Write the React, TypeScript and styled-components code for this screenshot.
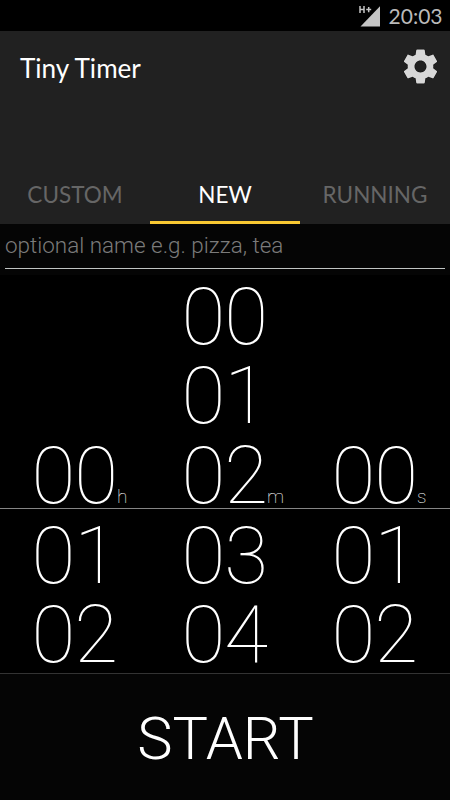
import React from "react";
import styled, { createGlobalStyle } from "styled-components";

const Global = createGlobalStyle`
  * { box-sizing: border-box; }
  body { margin: 0; background: #000; }
`;
const Screen = styled.div`
  width: 450px; height: 800px; background: #000; color: #fff;
  display: flex; flex-direction: column; overflow: hidden;
  font-family: Roboto, sans-serif; font-weight: 300;
`;
const StatusBar = styled.div`
  height: 31px; display: flex; justify-content: flex-end; align-items: center;
  gap: 8px; padding: 0 7.5px 0 0; color: #bababa;
`;
const Clock = styled.span`
  font-family: Lato, sans-serif; font-size: 21px; font-weight: 400; line-height: 24px;
`;
const SignalIcon = styled.svg`
  width: 23px; height: 24px; display: block;
`;
const Header = styled.header`
  height: 193px; background: #212121; display: flex; flex-direction: column;
  justify-content: space-between; font-family: Lato, sans-serif; font-weight: 400;
`;
const TitleRow = styled.div`
  display: flex; height: 70px; justify-content: space-between; align-items: center;
  padding: 0 9.5px 0 20px;
`;
const Title = styled.h1`
  margin: 3px 0 0; font-size: 26.1px; font-weight: 400; line-height: 32px;
`;
const GearIcon = styled.svg`
  width: 41px; height: 41px; display: block;
`;
const Tabs = styled.nav`
  display: grid; grid-template-columns: repeat(3, 1fr); height: 58px;
`;
const Tab = styled.div<{ $active?: boolean }>`
  display: flex; align-items: center; justify-content: center; font-size: 22.5px;
  padding-top: 1px;
  color: ${p => (p.$active ? "#fff" : "#666")};
  border-bottom: 3px solid ${p => (p.$active ? "#f9c832" : "transparent")};
`;
const NamePanel = styled.div`
  height: 51px; padding: 0 5px; background: #050505;
`;
const NameField = styled.div`
  height: 45px; border-bottom: 1px solid #c0c4c3; color: #7b7b7b;
  font-size: 22.45px; line-height: 43px; white-space: nowrap;
`;
const Picker = styled.main`
  height: 233px; display: grid; grid-template-columns: repeat(3, 1fr);
  align-items: end;
`;
const LowerPicker = styled(Picker)`
  height: 166px; align-items: start;
  border-top: 1px solid #858585; border-bottom: 1px solid #333;
`;
const Column = styled.div<{ $lower?: boolean }>`
  display: flex; flex-direction: column;
  padding: ${p => (p.$lower ? "7.5px 1.5px 0 0" : "2.7px 1.5px 0 0")};
`;
const Cell = styled.div`
  height: 79.67px; display: flex; justify-content: center; align-items: baseline;
  font-size: 80px; font-weight: 100; line-height: 79.67px; letter-spacing: -1px;
`;
const Unit = styled.span`
  width: 0; font-size: 19px; line-height: 22px; color: #fff; font-weight: 100;
  letter-spacing: 0;
`;
const Start = styled.button`
  flex: 1; border: 0; padding: 4px 0 0 1px; background: #050505; color: #fff;
  font: 300 59.5px Roboto, sans-serif;
`;

const columns = [
  { unit: "h", above: ["00"], below: ["01", "02"] },
  { unit: "m", above: ["00", "01", "02"], below: ["03", "04"] },
  { unit: "s", above: ["00"], below: ["01", "02"] },
];

export default function App() {
  return (
    <Screen>
      <Global />
      <StatusBar>
        <SignalIcon viewBox="0 0 23 24">
          <path d="M2.5 22.5 22 2.3V22.5Z" fill="#c4c4c4" />
          <path d="M2 2V9M6 2V9M2 5.5H6M8 6H13M10.6 3V8.5" fill="none" stroke="#000" strokeWidth="3.2" />
          <path d="M2 2V9M6 2V9M2 5.5H6M8.2 5.6H13.2M10.7 3V8.2" fill="none" stroke="#c4c4c4" strokeWidth="1.5" />
        </SignalIcon>
        <Clock>20:03</Clock>
      </StatusBar>
      <Header>
        <TitleRow>
          <Title>Tiny Timer</Title>
          <GearIcon viewBox="0 0 24 24">
            <path
              fill="#d8d8d8"
              stroke="#111"
              strokeWidth=".5"
              paintOrder="stroke"
              d="M19.43 12.98c.04-.32.07-.64.07-.98s-.03-.66-.07-.98l2.11-1.65c.19-.15.24-.42.12-.64l-2-3.46c-.12-.22-.39-.3-.61-.22l-2.49 1c-.52-.4-1.08-.73-1.69-.98l-.38-2.65C14.46 2.18 14.25 2 14 2h-4c-.25 0-.46.18-.49.42l-.38 2.65c-.61.25-1.17.59-1.69.98l-2.49-1c-.23-.09-.49 0-.61.22l-2 3.46c-.13.22-.07.49.12.64l2.11 1.65c-.04.32-.07.65-.07.98s.03.66.07.98l-2.11 1.65c-.19.15-.24.42-.12.64l2 3.46c.12.22.39.3.61.22l2.49-1c.52.4 1.08.73 1.69.98l.38 2.65c.03.24.24.42.49.42h4c.25 0 .46-.18.49-.42l.38-2.65c.61-.25 1.17-.59 1.69-.98l2.49 1c.23.09.49 0 .61-.22l2-3.46c.12-.22.07-.49-.12-.64l-2.11-1.65zM12 15.5c-1.93 0-3.5-1.57-3.5-3.5s1.57-3.5 3.5-3.5 3.5 1.57 3.5 3.5-1.57 3.5-3.5 3.5z"
            />
          </GearIcon>
        </TitleRow>
        <Tabs><Tab>CUSTOM</Tab><Tab $active>NEW</Tab><Tab>RUNNING</Tab></Tabs>
      </Header>
      <NamePanel>
        <NameField>optional name e.g. pizza, tea</NameField>
      </NamePanel>
      <Picker>
        {columns.map(c => (
          <Column key={c.unit}>
            {c.above.map((v, i) => (
              <Cell key={v}>{v}{i === c.above.length - 1 && <Unit>{c.unit}</Unit>}</Cell>
            ))}
          </Column>
        ))}
      </Picker>
      <LowerPicker as="section">
        {columns.map(c => (
          <Column key={c.unit} $lower>
            {c.below.map(v => <Cell key={v}>{v}</Cell>)}
          </Column>
        ))}
      </LowerPicker>
      <Start>START</Start>
    </Screen>
  );
}
